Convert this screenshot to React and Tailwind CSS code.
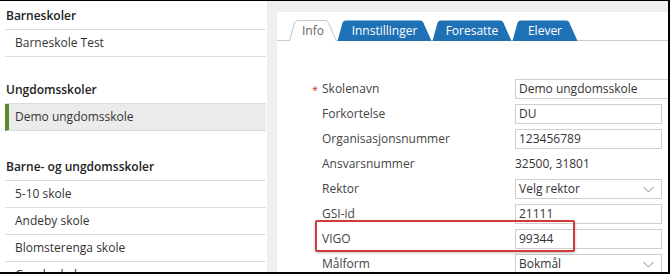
const sections = [
  { title: 'Barneskoler', items: ['Barneskole Test'], mt: 'mt-0' },
  { title: 'Ungdomsskoler', items: ['Demo ungdomsskole'], mt: 'mt-[18px]', active: 'Demo ungdomsskole' },
  { title: 'Barne- og ungdomsskoler', items: ['5-10 skole', 'Andeby skole', 'Blomsterenga skole', 'Granly skole'], mt: 'mt-[21px]' },
]

const Tab = ({ label, w, active, className }) => {
  const d = `M0.5,21 L5.5,2.8 Q6.4,0.5 9,0.5 L${w - 12},0.5 Q${w - 9.4},0.5 ${w - 8.6},2.8 L${w - 0.5},21`
  return (
    <div className={`relative flex h-[21px] items-center justify-center ${className}`}>
      <svg className="absolute inset-0 h-full w-full" viewBox={`0 0 ${w} 21`} preserveAspectRatio="none">
        {active ? (
          <path d={d} fill="#ffffff" stroke="#c8c8c8" strokeWidth="1" />
        ) : (
          <path d={d + ' Z'} fill="#1f71b6" />
        )}
      </svg>
      <span className={`relative text-[12px] leading-none ${active ? 'text-[#666]' : 'text-white'}`}>{label}</span>
    </div>
  )
}

const Row = ({ label, required, children }) => (
  <div className="flex h-[20px] items-center">
    <span className="w-[10px] text-[11px] leading-none text-[#c0392b]">{required ? '*' : ''}</span>
    <span className="w-[193px] text-[12px] text-[#444]">{label}</span>
    {children}
  </div>
)

const Input = ({ value, wide }) => (
  <div className={`flex h-[20px] items-center border border-[#cfcfcf] bg-white pl-[3px] text-[12px] text-[#333] ${wide ? 'w-[160px]' : 'w-[147px]'}`}>
    {value}
  </div>
)

// nedtrekksliste med tynn pil
const Select = ({ value }) => (
  <div className="flex h-[20px] w-[147px] items-center justify-between border border-[#cfcfcf] bg-white pl-[3px] pr-[7px] text-[12px] text-[#333]">
    <span>{value}</span>
    <svg width="11" height="7" viewBox="0 0 11 7">
      <polyline points="0.5,1 5.5,6 10.5,1" fill="none" stroke="#8a8a8a" strokeWidth="1" />
    </svg>
  </div>
)

export default function App() {
  return (
    <div className="flex h-[274px] w-[670px] overflow-hidden border-t border-r-2 border-b-2 border-black bg-white font-['Open_Sans',sans-serif]">
      <aside className="w-[267px] shrink-0 bg-white">
        <div className="ml-[5px] mr-[1px]">
          {sections.map((s) => (
            <div key={s.title} className={s.mt}>
              <div className="flex h-[29px] items-center border-b border-[#dcdcdc] pl-[1px] pt-[1px] text-[12px] font-semibold text-[#222]">
                {s.title}
              </div>
              {s.items.map((it) => (
                <div
                  key={it}
                  className={`flex h-[27px] items-center border-b border-[#dcdcdc] text-[12px] text-[#333] ${
                    s.active === it ? 'border-l-4 border-l-[#5b8a2b] bg-[#ebebeb] pl-[6px]' : 'pl-[10px]'
                  }`}
                >
                  {it}
                </div>
              ))}
            </div>
          ))}
        </div>
      </aside>

      <main className="flex flex-1 flex-col bg-[#efefef] pl-[10px] pt-[11px]">
        <div className="flex-1 overflow-hidden bg-white">
          <div className="flex h-[29px] items-end border-b border-[#cccccc]">
            <div className="-mb-px ml-[12px] flex items-end">
              <Tab label="Info" w={48} active className="w-[48px]" />
              <Tab label="Innstillinger" w={95} className="w-[95px]" />
              <Tab label="Foresatte" w={80} className="w-[80px]" />
              <Tab label="Elever" w={66} className="w-[66px]" />
            </div>
            <div className="flex-1" />
            <div className="-mb-px h-[31px] w-[6px] self-end border-l border-[#dedede] bg-[#efefef]" />
          </div>

          <div className="ml-[35px] mt-[38px] flex flex-col gap-[5px]">
            <Row label="Skolenavn" required>
              <Input value="Demo ungdomsskole" wide />
            </Row>
            <Row label="Forkortelse">
              <Input value="DU" />
            </Row>
            <Row label="Organisasjonsnummer">
              <Input value="123456789" />
            </Row>
            <Row label="Ansvarsnummer">
              <span className="text-[12px] text-[#333]">32500, 31801</span>
            </Row>
            <Row label="Rektor">
              <Select value="Velg rektor" />
            </Row>
            <Row label="GSI-id">
              <Input value="21111" />
            </Row>
            <div className="relative">
              <Row label="VIGO">
                <Input value="99344" />
              </Row>
              <div className="absolute left-[3px] top-[-9px] h-[32px] w-[260px] rounded-[2px] border-2 border-[#cf3a3a] shadow-[0_1px_3px_rgba(0,0,0,0.25)]" />
            </div>
            <Row label="Målform">
              <Select value="Bokmål" />
            </Row>
          </div>
        </div>
      </main>
    </div>
  )
}
